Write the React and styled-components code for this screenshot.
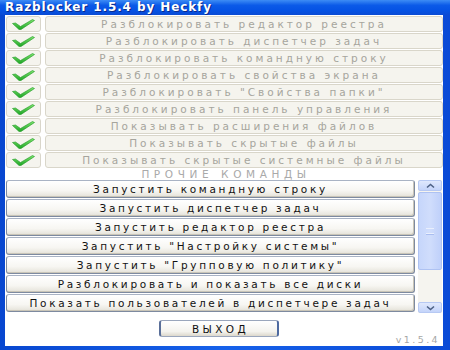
import React from "react";
import styled, { createGlobalStyle } from "styled-components";

const Global = createGlobalStyle`
  html, body { margin: 0; padding: 0; background: #0a4fd8; }
  #root { width: 450px; height: 350px; }
`;

const Window = styled.div`
  width: 450px;
  height: 350px;
  display: flex;
  flex-direction: column;
  background: linear-gradient(90deg, #0847d0 0%, #1661ea 50%, #0a4ad6 100%);
  box-sizing: border-box;
`;

const TitleBar = styled.div`
  height: 15px;
  flex: none;
  display: flex;
  align-items: center;
  padding-left: 5px;
  background: linear-gradient(180deg, #3d8cf5 0%, #0b5ae8 35%, #0552e4 70%, #0a4bd4 100%);
  color: #fff;
  font-family: "DejaVu Sans", Verdana, sans-serif;
  font-weight: bold;
  font-size: 12px;
  letter-spacing: 0.9px;
  text-shadow: 1px 1px 0 #0a2a8a;
  line-height: 15px;
`;

const Body = styled.div`
  flex: 1;
  margin: 0 7px 4px 5px;
  background: #fff;
  display: flex;
  flex-direction: column;
  padding-top: 1px;
  box-sizing: border-box;
  min-height: 0;
`;

const CheckList = styled.div`
  display: flex;
  flex-direction: column;
  gap: 1px;
`;

const CheckRow = styled.div`
  display: grid;
  grid-template-columns: 35px 1fr;
  gap: 4px;
  height: 16px;
  padding-left: 1px;
`;

const CheckCell = styled.div`
  background: #f5f4ee;
  border: 1px solid #d9d6ca;
  border-radius: 3px;
  display: flex;
  align-items: center;
  justify-content: center;
  box-sizing: border-box;
`;

const DisabledButton = styled.div`
  background: #f5f4ee;
  border: 1px solid #d9d6ca;
  border-radius: 3px;
  box-sizing: border-box;
  display: flex;
  align-items: center;
  justify-content: center;
  color: #a6a59d;
  font-family: "DejaVu Sans", Verdana, sans-serif;
  font-size: 10.5px;
  letter-spacing: 3px;
  white-space: nowrap;
  overflow: hidden;
`;

const SectionLabel = styled.div`
  height: 12px;
  line-height: 13px;
  text-align: center;
  color: #a9a9a9;
  font-family: "DejaVu Sans", Verdana, sans-serif;
  font-size: 10.5px;
  letter-spacing: 4.6px;
  padding-left: 4px;
`;

const Commands = styled.div`
  display: flex;
  gap: 3px;
  padding-left: 1px;
`;

const CommandList = styled.div`
  flex: 1;
  display: flex;
  flex-direction: column;
  gap: 1px;
`;

const CommandButton = styled.div`
  height: 18px;
  box-sizing: border-box;
  border: 1px solid #7d8aa0;
  border-top-color: #a9b3c4;
  border-radius: 3px;
  background: linear-gradient(180deg, #ffffff 0%, #f7f6f2 60%, #e9e7df 90%, #d6d2c6 100%);
  box-shadow: inset -1px -1px 0 #c9c5b8;
  display: flex;
  align-items: center;
  justify-content: center;
  color: #111;
  font-family: "DejaVu Sans", Verdana, sans-serif;
  font-size: 10.5px;
  letter-spacing: 2.7px;
  white-space: nowrap;
  overflow: hidden;
`;

const ScrollBar = styled.div`
  width: 24px;
  margin-right: 1px;
  display: flex;
  flex-direction: column;
  background: #f5f4ef;
  height: 133px;
`;

const ScrollButton = styled.div`
  height: 11px;
  flex: none;
  border: 1px solid #b7c9f3;
  border-radius: 2px;
  background: linear-gradient(180deg, #dfe8fd 0%, #c4d4fa 100%);
  display: flex;
  align-items: center;
  justify-content: center;
  box-sizing: border-box;
  margin-top: ${(p) => (p.$down ? "auto" : "0")};
`;

const Thumb = styled.div`
  height: 78px;
  margin-top: 1px;
  box-sizing: border-box;
  border: 1px solid #aec2f2;
  border-radius: 2px;
  background: linear-gradient(90deg, #c6d6fb 0%, #d0ddfc 50%, #bfd0fa 100%);
  display: flex;
  align-items: center;
  justify-content: center;
`;

const Grip = styled.div`
  width: 8px;
  height: 4px;
  border-top: 1px solid #e9effd;
  border-bottom: 1px solid #e9effd;
  box-shadow: 0 1px 0 #a9bdf0;
`;

const Footer = styled.div`
  flex: 1;
  display: grid;
  grid-template-columns: 1fr 120px 1fr;
  padding-top: 7px;
  margin-left: -10px;
`;

const ExitButton = styled.div`
  grid-column: 2;
  height: 17px;
  box-sizing: border-box;
  border: 1px solid #9aa6bc;
  border-left: 2px solid #5a6f99;
  border-right: 2px solid #4e6aa0;
  border-radius: 3px;
  background: linear-gradient(180deg, #ffffff 0%, #f4f3ee 70%, #dcd8cc 100%);
  display: flex;
  align-items: center;
  justify-content: center;
  color: #111;
  font-family: "DejaVu Sans", Verdana, sans-serif;
  font-size: 10.5px;
  letter-spacing: 3.4px;
  padding-left: 3px;
`;

const Version = styled.div`
  grid-column: 3;
  align-self: end;
  justify-self: end;
  padding: 0 3px 1px 0;
  color: #a6a6a6;
  font-family: "DejaVu Sans", Verdana, sans-serif;
  font-size: 9.5px;
  letter-spacing: 2.4px;
`;

const Check = () => (
  <svg width="25" height="12" viewBox="0 0 24 12">
    <defs>
      <linearGradient id="cg" x1="0" y1="0" x2="0" y2="1">
        <stop offset="0" stopColor="#7ee36e" />
        <stop offset="1" stopColor="#1ea526" />
      </linearGradient>
    </defs>
    <path
      d="M1 5.5 L4 5 L9 8.5 L21 1.5 L23 2.5 L9.5 11.5 L7.5 11.5 Z"
      fill="url(#cg)"
      stroke="#1c9a22"
      strokeWidth="0.6"
      strokeLinejoin="round"
    />
  </svg>
);

const Chevron = ({ down }) => (
  <svg width="9" height="6" viewBox="0 0 9 6">
    <path
      d={down ? "M1 1.5 L4.5 4.5 L8 1.5" : "M1 4.5 L4.5 1.5 L8 4.5"}
      fill="none"
      stroke="#4d6185"
      strokeWidth="1.6"
    />
  </svg>
);

const toggles = [
  "Разблокировать редактор реестра",
  "Разблокировать диспетчер задач",
  "Разблокировать командную строку",
  "Разблокировать свойства экрана",
  "Разблокировать \"Свойства папки\"",
  "Разблокировать панель управления",
  "Показывать расширения файлов",
  "Показывать скрытые файлы",
  "Показывать скрытые системные файлы",
];

const commands = [
  "Запустить командную строку",
  "Запустить диспетчер задач",
  "Запустить редактор реестра",
  "Запустить \"Настройку системы\"",
  "Запустить \"Групповую политику\"",
  "Разблокировать и показать все диски",
  "Показать пользователей в диспетчере задач",
];

export default function App() {
  return (
    <>
      <Global />
      <Window>
        <TitleBar>Razblocker 1.5.4 by Heckfy</TitleBar>
        <Body>
          <CheckList>
            {toggles.map((t) => (
              <CheckRow key={t}>
                <CheckCell>
                  <Check />
                </CheckCell>
                <DisabledButton>{t}</DisabledButton>
              </CheckRow>
            ))}
          </CheckList>
          <SectionLabel>ПРОЧИЕ КОМАНДЫ</SectionLabel>
          <Commands>
            <CommandList>
              {commands.map((c) => (
                <CommandButton key={c}>{c}</CommandButton>
              ))}
            </CommandList>
            <ScrollBar>
              <ScrollButton>
                <Chevron />
              </ScrollButton>
              <Thumb>
                <Grip />
              </Thumb>
              <ScrollButton $down>
                <Chevron down />
              </ScrollButton>
            </ScrollBar>
          </Commands>
          <Footer>
            <ExitButton>ВЫХОД</ExitButton>
            <Version>v1.5.4</Version>
          </Footer>
        </Body>
      </Window>
    </>
  );
}
